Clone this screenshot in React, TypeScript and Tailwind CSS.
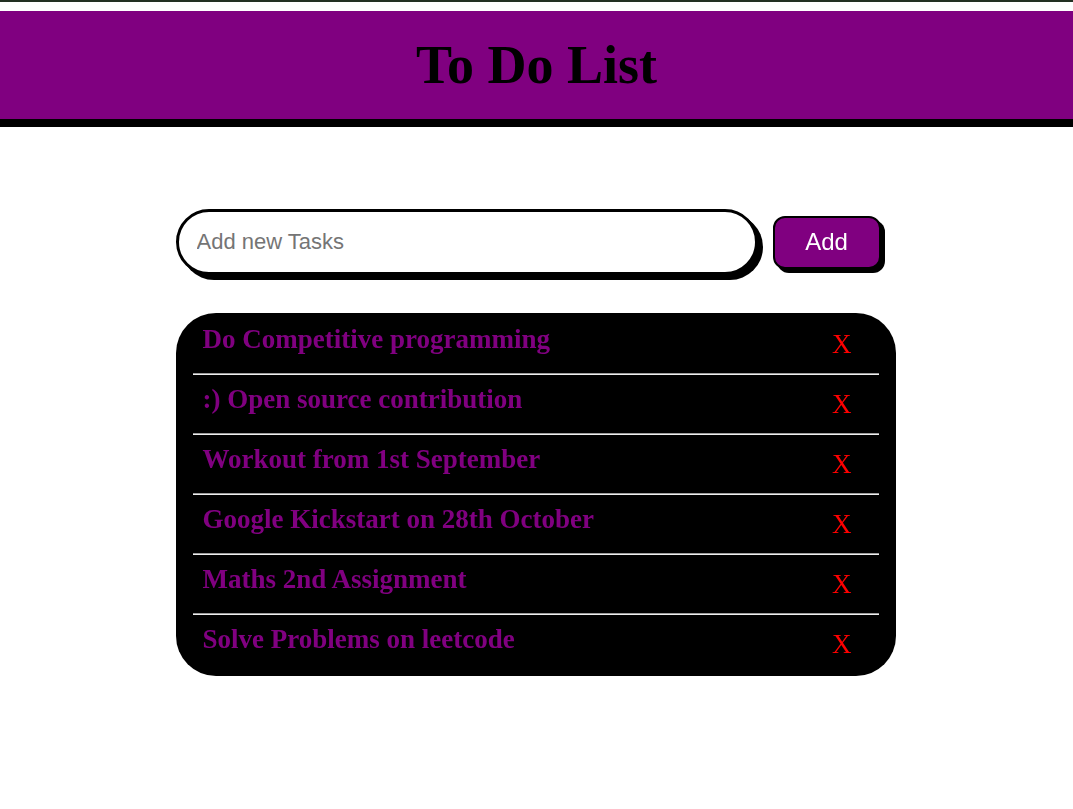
import { useState } from 'react';

const initialTasks = [
  'Do Competitive programming',
  ':) Open source contribution',
  'Workout from 1st September',
  'Google Kickstart on 28th October',
  'Maths 2nd Assignment',
  'Solve Problems on leetcode',
];

export default function App() {
  const [tasks, setTasks] = useState<string[]>(initialTasks);
  const [text, setText] = useState('');

  const addTask = () => {
    if (!text.trim()) return;
    setTasks(prev => [...prev, text.trim()]);
    setText('');
  };

  const removeTask = (idx: number) => {
    setTasks(prev => prev.filter((_, i) => i !== idx));
  };

  return (
    <div className="min-h-[809px] bg-white">
      <div className="h-[2px] bg-[#223022]" />
      <header className="mt-[9px] h-[108px] bg-[#800080] border-b-8 border-black flex items-center justify-center box-content">
        <h1 className="text-[54px] font-bold text-black font-['Liberation_Serif',serif] leading-none">To Do List</h1>
      </header>

      <main className="w-[720px] mx-auto mt-[82px] -translate-x-[1px]">
        <div className="flex items-center gap-[15px]">
          <input
            autoFocus
            value={text}
            onChange={e => setText(e.target.value)}
            onKeyDown={e => { if (e.key === 'Enter') addTask(); }}
            placeholder="Add new Tasks"
            className="w-[582px] h-[66px] border-[3px] border-black rounded-full shadow-[5px_5px_0_#000] pl-[18px] text-[22px] font-['Liberation_Sans',Arial,sans-serif] text-black placeholder:text-[#757575] outline-none bg-white"
          />
          <button
            onClick={addTask}
            className="w-[108px] h-[53px] bg-[#800080] border-2 border-black rounded-[12px] shadow-[4px_4px_0_#000] text-white text-[24px] font-['Liberation_Sans',Arial,sans-serif]"
          >
            Add
          </button>
        </div>

        <ul className="mt-[38px] bg-black rounded-[40px] px-[17px] pt-[2px] pb-[3px]">
          {tasks.map((task, i) => (
            <li key={i}>
              <div className="h-[58px] flex justify-between">
                <span className="pl-[10px] pt-[11px] text-[27px] leading-[27px] font-bold text-[#800080] font-['Liberation_Serif',serif]">
                  {task}
                </span>
                <button
                  onClick={() => removeTask(i)}
                  className="mr-[27px] pt-[16px] text-[27px] leading-[27px] text-[#ff0000] font-['Liberation_Serif',serif] self-start"
                >
                  X
                </button>
              </div>
              {i < tasks.length - 1 && (
                <div className="border-t border-t-[#9a9a9a] border-b border-b-[#eeeeee]" />
              )}
            </li>
          ))}
        </ul>
      </main>
    </div>
  );
}
